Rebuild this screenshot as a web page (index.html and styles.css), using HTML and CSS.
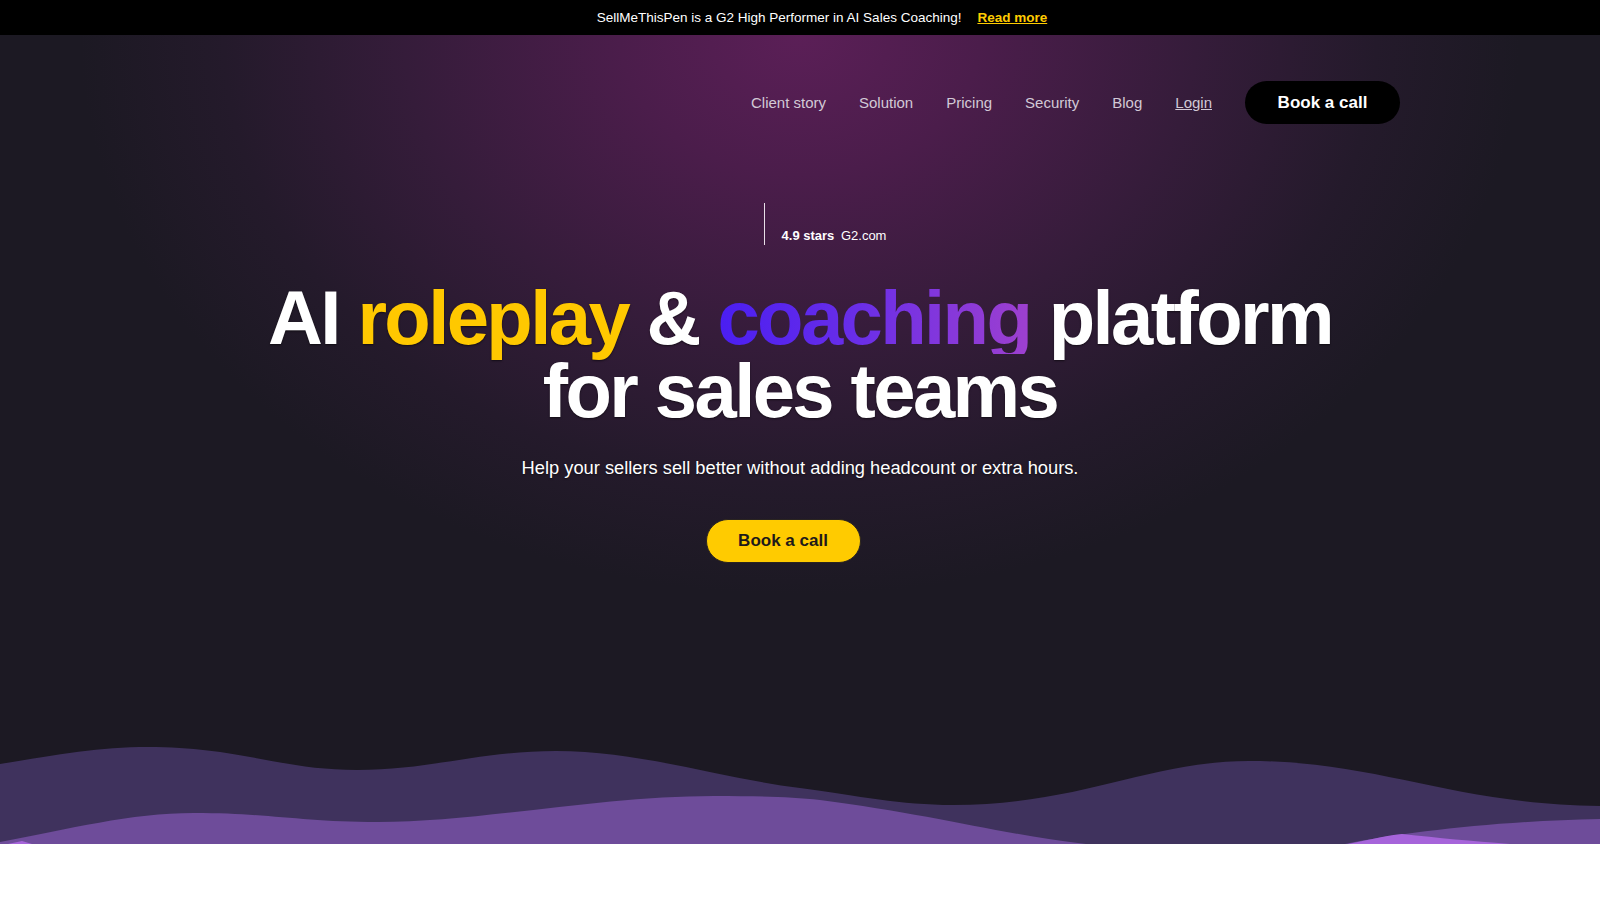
FILE: index.html
```html
<!DOCTYPE html>
<html lang="en">
<head>
<meta charset="utf-8">
<title>SellMeThisPen - AI roleplay & coaching platform</title>
<link rel="stylesheet" href="styles.css">
</head>
<body>
<div class="topbar">
  <span class="topbar-text">SellMeThisPen is a G2 High Performer in AI Sales Coaching!</span>
  <a class="topbar-link" href="#">Read more</a>
</div>
<section class="hero">
  <header class="nav">
    <div class="nav-inner">
      <a class="nav-link" href="#">Client story</a>
      <a class="nav-link" href="#">Solution</a>
      <a class="nav-link" href="#">Pricing</a>
      <a class="nav-link" href="#">Security</a>
      <a class="nav-link" href="#">Blog</a>
      <a class="nav-link nav-login" href="#">Login</a>
      <a class="btn btn-dark" href="#">Book a call</a>
    </div>
  </header>
  <div class="rating">
    <span class="rating-logo"></span>
    <span class="rating-divider"></span>
    <span class="rating-text"><b>4.9 stars</b> G2.com</span>
  </div>
  <h1 class="headline">
    <span class="hl-line">AI <span class="hl-yellow">roleplay</span> &amp; <span class="hl-grad">coaching</span> platform</span>
    <span class="hl-line">for sales teams</span>
  </h1>
  <p class="subtitle">Help your sellers sell better without adding headcount or extra hours.</p>
  <a class="btn btn-yellow" href="#">Book a call</a>
  <div class="waves">
    <svg viewBox="0 0 1600 100" preserveAspectRatio="none" width="1600" height="100">
      <path fill="#3f325d" d="M0,20 C60,10 100,3 148,3 C240,3 280,26 357,26 C430,26 480,7 556,7 C640,7 720,34 800,44 C860,52 900,61 953,61 C1080,61 1150,17 1249,17 C1380,17 1450,60 1600,62 L1600,100 L0,100 Z"/>
      <path fill="#6e4c9a" d="M0,98 C70,85 130,69 194,69 C270,69 300,78 378,78 C480,78 600,52 714,52 C760,52 790,53 820,56 C930,70 1000,90 1086,100 L0,100 Z"/>
      <path fill="#6e4c9a" d="M1345,100 C1405,88 1500,77 1600,75 L1600,100 Z"/>
      <path fill="#a664da" d="M1348,100 C1372,95 1390,91 1402,90 C1440,94 1470,97 1510,100 Z"/>
      <path fill="#a664da" d="M8,100 L22,97 L32,100 Z"/>
    </svg>
  </div>
</section>
<section class="below"></section>
</body>
</html>
```

FILE: styles.css
```css
* { box-sizing: border-box; }

html, body {
  margin: 0;
  padding: 0;
}

body {
  font-family: "Liberation Sans", Arial, sans-serif;
  background: #ffffff;
  color: #ffffff;
}

a { text-decoration: none; color: inherit; }

.topbar {
  height: 35px;
  background: #000000;
  display: flex;
  align-items: center;
  justify-content: center;
  gap: 16px;
  font-size: 13.5px;
  padding-left: 44px;
}

.topbar-text { color: #ffffff; }

.topbar-link {
  color: #ffcc00;
  font-weight: bold;
  text-decoration: underline;
}

.hero {
  height: 809px;
  display: flex;
  flex-direction: column;
  align-items: center;
  overflow: hidden;
  background-color: #1c1923;
  background-image: radial-gradient(ellipse 720px 560px at 50% 0, #5b1f57 0%, #4b1d4b 25%, #351c3a 55%, #241a2b 80%, rgba(28,25,35,0) 100%);
}

.nav {
  width: 100%;
  padding-top: 46px;
}

.nav-inner {
  width: 1200px;
  margin: 0 auto;
  display: flex;
  justify-content: flex-end;
  align-items: center;
  gap: 33px;
}

.nav-link {
  font-size: 15px;
  color: #d2c9d6;
}

.nav-login { text-decoration: underline; }

.btn {
  display: inline-flex;
  align-items: center;
  justify-content: center;
  width: 155px;
  height: 43px;
  border-radius: 22px;
  font-size: 17px;
  font-weight: bold;
}

.btn-dark {
  background: #000000;
  color: #ffffff;
}

.btn-yellow {
  background: #ffcb00;
  color: #1e1a1a;
  height: 44px;
  border: 1px solid #2a2420;
  margin-top: 39px;
  margin-right: 34px;
}

.rating {
  display: flex;
  align-items: flex-end;
  margin-top: 79px;
  height: 42px;
}

.rating-logo {
  width: 50px;
  height: 42px;
}

.rating-divider {
  width: 1px;
  height: 42px;
  background: #e8dfe8;
}

.rating-text {
  font-size: 13px;
  color: #ffffff;
  margin-left: 17px;
  line-height: 16px;
  padding-bottom: 1px;
}

.rating-text b { margin-right: 3px; }

.headline {
  margin: 36px 0 0;
  font-size: 76px;
  line-height: 73px;
  font-weight: bold;
  letter-spacing: -2.6px;
  text-align: center;
  color: #ffffff;
  text-shadow: 0 1px 2px rgba(0,0,0,0.55);
}

.hl-line {
  display: block;
  height: 73px;
}

.hl-yellow,
.hl-grad {
  display: inline-block;
  height: 73px;
}

.hl-yellow { color: #ffc800; }

.hl-grad {
  background: linear-gradient(90deg, #4a1ef2 0%, #6a2ee8 45%, #9e40cf 100%);
  -webkit-background-clip: text;
  background-clip: text;
  color: transparent;
  text-shadow: none;
}

.subtitle {
  margin: 29px 0 0;
  font-size: 18.3px;
  line-height: 24px;
  color: #ffffff;
  text-shadow: 0 1px 2px rgba(0,0,0,0.5);
}

.waves {
  margin-top: auto;
  width: 100%;
  height: 100px;
  line-height: 0;
}

.waves svg { display: block; width: 100%; height: 100px; }

.below {
  height: 56px;
  background: #ffffff;
}
```
